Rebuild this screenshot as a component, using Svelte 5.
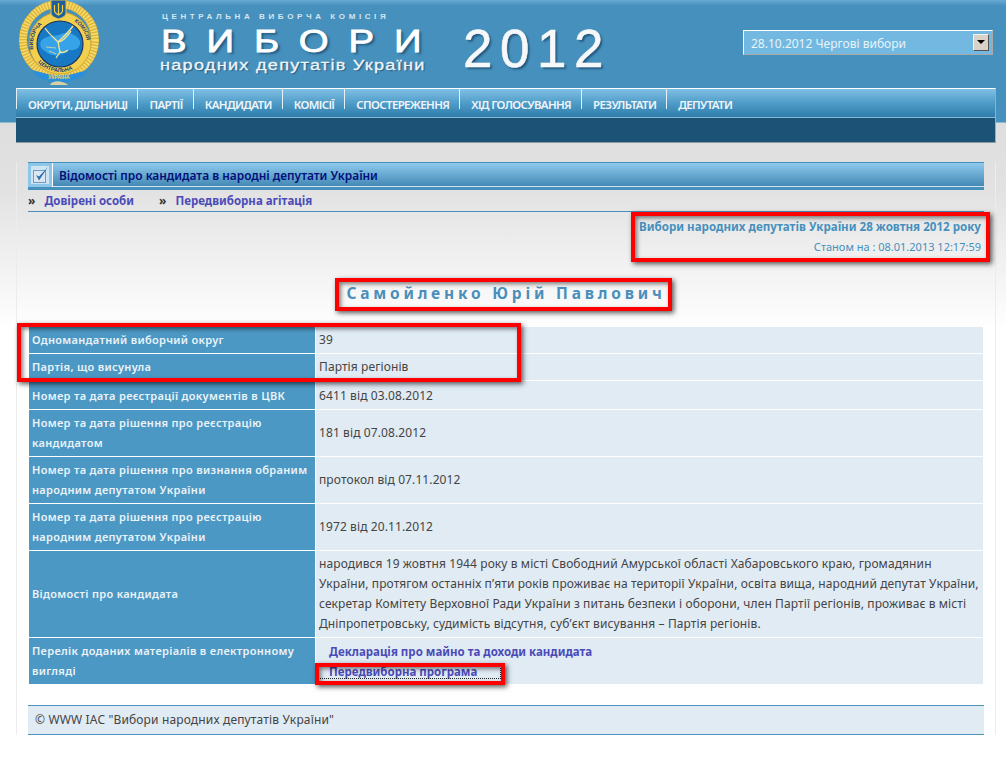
<script>
	const menu = ["ОКРУГИ, ДІЛЬНИЦІ", "ПАРТІЇ", "КАНДИДАТИ", "КОМІСІЇ", "СПОСТЕРЕЖЕННЯ", "ХІД ГОЛОСУВАННЯ", "РЕЗУЛЬТАТИ", "ДЕПУТАТИ"];

	const rows = [
		["Одномандатний виборчий округ", "39"],
		["Партія, що висунула", "Партія регіонів"],
		["Номер та дата реєстрації документів в ЦВК", "6411 від 03.08.2012"],
		["Номер та дата рішення про реєстрацію кандидатом", "181 від 07.08.2012"],
		["Номер та дата рішення про визнання обраним народним депутатом України", "протокол від 07.11.2012"],
		["Номер та дата рішення про реєстрацію народним депутатом України", "1972 від 20.11.2012"],
		["Відомості про кандидата", "народився 19 жовтня 1944 року в місті Свободний Амурської області Хабаровського краю, громадянин України, протягом останніх п’яти років проживає на території України, освіта вища, народний депутат України, секретар Комітету Верховної Ради України з питань безпеки і оборони, член Партії регіонів, проживає в місті Дніпропетровську, судимість відсутня, суб’єкт висування – Партія регіонів."],
	];

	// annotation boxes drawn over the page: x, y, w, h
	const marks = [
		[631, 212, 359, 50],
		[335, 278, 337, 33],
		[17, 323, 504, 59],
		[315, 663, 190, 22],
	];
</script>

<div class="page">
	<header>
		<svg class="logo" viewBox="18 0 82 85" width="82" height="85" aria-label="Герб">
			<defs>
				<path id="ring" d="M36 57 A27 27 0 1 1 84 57" />
				<path id="ringlow" d="M31 48 A29.500 29.500 0 0 0 89 48" />
			</defs>
			<circle cx="59" cy="40" r="36" fill="none" stroke="#e0b638" stroke-width="8" />
			<circle cx="59" cy="40" r="36" fill="none" stroke="#f6dc70" stroke-width="7" stroke-dasharray="1.500 1.500" />
			<circle cx="60" cy="43" r="31" fill="#f2d04e" stroke="#c29c2c" stroke-width="0.800" />
			<circle cx="60" cy="44" r="23" fill="#1778c4" stroke="#1d3560" stroke-width="1.200" />
			<path d="M41 41 C47 34 55 37 61 34 C69 31 77 35 80 41 C81 48 75 51 69 50 C61 57 51 57 45 51 C41 49 39 45 41 41Z" fill="#36a2e8" />
			<g fill="none" stroke="#f3e396" stroke-width="1.300">
				<path d="M45 28 C49 34 54 38 58 42 C62 38 68 33 73 26" />
				<path d="M58 42 C62 42 66 38 71 31" />
				<path d="M58 42 L60 52 L56 58" />
				<path d="M60 52 C64 53 66 52 68 50" />
				<path d="M46 47 L56 48 M49 51 L56 54" stroke-width="0.700" />
			</g>
			<g class="ringtext" fill="#1f3c6e">
				<text><textPath href="#ring" startOffset="8">ВИБОРЧА</textPath></text>
				<text><textPath href="#ring" startOffset="70">КОМІСІЯ</textPath></text>
				<text><textPath href="#ringlow" startOffset="16">ЦЕНТРАЛЬНА</textPath></text>
			</g>
			<path d="M51 0 H66 V14 C65 17 61 18 58.500 19 C56 18 52 17 51 14Z" fill="#1f5f9e" stroke="#e3c040" stroke-width="1" />
			<path d="M58.500 3 V15 M54.500 5 V11 C54.500 13 57 14 58.500 15 C60 14 62.500 13 62.500 11 V5" fill="none" stroke="#f2d040" stroke-width="1.200" />
			<path d="M32 70 L44 73 C52 76 68 76 76 73 L88 70 L83 76 L74 80 C64 83 54 83 44 80 L37 76Z" fill="#2a8fdc" />
			<text class="ribbon" x="59" y="78.500" text-anchor="middle" fill="#f2d75a">УКРАЇНА</text>
			<path d="M50 85 C52 80 62 80 68 85Z" fill="#d8d0a0" />
		</svg>

		<div class="brand">
			<div class="cvk">ЦЕНТРАЛЬНА ВИБОРЧА КОМІСІЯ</div>
			<div class="vybory">ВИБОРИ</div>
			<div class="deputies">народних депутатів України</div>
		</div>
		<div class="year">2012</div>

		<div class="select">
			<span>28.10.2012 Чергові вибори</span>
			<i class="arrow"></i>
		</div>
	</header>

	<nav>
		{#each menu as item}
			<a href="#top">{item}</a>
		{/each}
	</nav>
	<div class="darkbar"></div>

	<main>
		<div class="title">
			<span class="check">
				<svg viewBox="0 0 18 18" width="18" height="18">
					<rect x="2.500" y="4.500" width="12" height="12" fill="#dbe8f3" stroke="#6a9cc4" />
					<path d="M5 9 L8 14.500 L17 1 L8 10.500 Z" fill="#2f6ea8" />
				</svg>
			</span>
			<h1>Відомості про кандидата в народні депутати України</h1>
		</div>
		<div class="subnav">
			<span>»</span><a href="#top">Довірені особи</a>
			<span class="second">»</span><a href="#top">Передвиборна агітація</a>
		</div>

		<div class="meta">
			<b>Вибори народних депутатів України 28 жовтня 2012 року</b>
			<p>Станом на : 08.01.2013 12:17:59</p>
		</div>

		<h2>Самойленко Юрій Павлович</h2>

		<table>
			<tbody>
				{#each rows as [label, value]}
					<tr>
						<th>{label}</th>
						<td>{value}</td>
					</tr>
				{/each}
				<tr>
					<th>Перелік доданих матеріалів в електронному вигляді</th>
					<td class="files">
						<a href="#top">Декларація про майно та доходи кандидата</a>
						<a href="#top" class="focused">Передвиборна програма</a>
					</td>
				</tr>
			</tbody>
		</table>

		<footer>© WWW IAC "Вибори народних депутатів України"</footer>
	</main>

	{#each marks as [x, y, w, h]}
		<div class="mark" style="left:{x}px;top:{y}px;width:{w}px;height:{h}px"></div>
	{/each}
</div>

<style>
	:global(body) {
		margin: 0;
		background: #fff;
	}

	.page {
		position: relative;
		height: 757px;
		overflow: hidden;
		font-family: "Noto Sans", "DejaVu Sans", sans-serif;
		font-size: 12px;
		color: #444;
		background: linear-gradient(
			#68abd5 0,
			#4590bc 6px,
			#4590bc 122px,
			#dedede 123px,
			#e2e2e2 190px,
			#fff 330px
		);
	}

	header {
		display: flex;
		height: 88px;
		padding-left: 18px;
		box-sizing: border-box;
	}

	.logo {
		flex: none;
	}

	.brand {
		width: 303px;
		margin-left: 60px;
		padding-top: 12px;
		color: #fff;
		font-family: "Liberation Sans", sans-serif;
		white-space: nowrap;
	}

	.cvk {
		margin-left: 2px;
		font-size: 8px;
		line-height: 10px;
		letter-spacing: 3.600px;
		color: #d4e6f2;
		font-weight: 700;
	}

	.vybory {
		margin: 2px 0 0 1px;
		font-size: 32px;
		line-height: 34px;
		letter-spacing: 16.600px;
		transform: scaleX(1.2);
		transform-origin: left;
		-webkit-text-stroke: 0.800px #fff;
		text-shadow: 2px 2px 2px #25597f;
	}

	.deputies {
		font-size: 14px;
		line-height: 14px;
		letter-spacing: 1px;
		transform: scaleX(1.29);
		transform-origin: left;
		color: #eef4f8;
		-webkit-text-stroke: 0.300px #eef4f8;
		text-shadow: 1px 1px 1px #25597f;
	}

	.year {
		height: 60px;
		margin-top: 19px;
		font-family: "Liberation Sans", sans-serif;
		font-size: 53px;
		line-height: 60px;
		letter-spacing: 7.500px;
		color: #f6f8fa;
		-webkit-text-stroke: 0.600px #f6f8fa;
		text-shadow: 2px 2px 2px #25597f;
	}

	.select {
		display: flex;
		align-items: center;
		justify-content: space-between;
		box-sizing: border-box;
		width: 250px;
		height: 25px;
		margin: 30px 13px 0 auto;
		padding: 0 3px 0 7px;
		background: #72b8e0;
		border: 1px solid;
		border-color: #fff #a9a9a9 #a9a9a9 #fff;
		color: #e8f3fa;
		font-size: 12px;
	}

	.select span {
		padding-top: 1px;
	}

	.arrow {
		position: relative;
		display: block;
		box-sizing: border-box;
		width: 16px;
		height: 17px;
		background: #d8d2c8;
		border: 1px solid;
		border-color: #f4f2ee #555 #555 #f4f2ee;
	}

	.arrow::after {
		content: "";
		position: absolute;
		left: 3px;
		top: 5px;
		border: 4px solid transparent;
		border-top: 4px solid #000;
	}

	nav {
		display: flex;
		box-sizing: border-box;
		height: 30px;
		margin: 0 10px 0 16px;
		background: linear-gradient(#7fbfe5 0, #4f9cc8 14px, #2f7dab 28px);
		border-top: 1px solid #fff;
		border-bottom: 1px solid #82b9d8;
		border-right: 1px solid #a9a9a9;
	}

	nav a {
		box-sizing: border-box;
		height: 28px;
		padding: 8px 10px 0 11px;
		border-left: 1px solid #d3e6f2;
		border-image: linear-gradient(#e4f0f7 0 20px, transparent 20px) 1;
		color: #eef5fa;
		font-size: 11.500px;
		line-height: 16px;
		font-weight: 600;
		letter-spacing: -0.650px;
		text-decoration: none;
		white-space: nowrap;
	}

	.darkbar {
		box-sizing: border-box;
		height: 25px;
		margin: 0 10px 0 16px;
		background: #1c5275;
		border-right: 1px solid #a9a9a9;
		border-bottom: 1px solid #8b9aa6;
	}

	main {
		box-sizing: border-box;
		height: 573px;
		margin: 19px 10px 0 16px;
		padding: 0 11px;
		border-left: 1px solid #ececec;
		border-right: 1px solid #ececec;
	}

	.title {
		display: flex;
		height: 28px;
		border-top: 1px solid #4590bc;
		border-bottom: 3px solid #4590bc;
		box-sizing: border-box;
	}

	.check {
		display: flex;
		align-items: center;
		justify-content: center;
		width: 25px;
		background: #8cc6e8;
		border-right: 1px solid #fff;
		box-sizing: border-box;
	}

	.check svg {
		background: #cfe4f3;
	}

	h1 {
		flex: 1;
		margin: 0;
		padding-left: 6px;
		background: linear-gradient(#8fcaec, #4489b6);
		border-bottom: 1px solid #cfe2ee;
		color: #00107a;
		font-size: 11.900px;
		font-weight: 600;
		line-height: 24px;
	}

	.subnav {
		display: flex;
		align-items: center;
		height: 22px;
		border-bottom: 1px solid #4590bc;
		box-sizing: border-box;
		color: #333;
		font-weight: 700;
	}

	.subnav a {
		margin-left: 9px;
		color: #4b4bb8;
		font-size: 11.500px;
		font-weight: 700;
		text-decoration: none;
	}

	.subnav .second {
		margin-left: 25px;
	}

	.meta {
		margin-right: 3px;
		padding-top: 5px;
		text-align: right;
		color: #4590bc;
		line-height: 20px;
	}

	.meta b {
		font-size: 11.600px;
		font-weight: 700;
	}

	.meta p {
		margin: 0;
		font-size: 11px;
	}

	h2 {
		margin: 26px 0 0;
		text-align: center;
		color: #4a8fbb;
		font-size: 15.500px;
		line-height: 20px;
		letter-spacing: 3.800px;
		font-weight: 700;
	}

	table {
		width: 956px;
		margin: 23px 0 0;
		border-collapse: collapse;
		background: #fff;
	}

	th,
	td {
		padding: 3px 2px 3px 3px;
		line-height: 20px;
		border: 1px solid #fff;
		box-sizing: border-box;
	}

	tr:nth-child(3) th,
	tr:nth-child(3) td {
		padding-top: 5px;
	}

	th {
		width: 287px;
		background: #4c98c4;
		color: #eaf3f9;
		font-size: 11px;
		font-weight: 600;
		text-align: left;
		letter-spacing: 0.320px;
	}

	td {
		background: #e1ebf4;
		color: #444;
		letter-spacing: 0.100px;
	}

	.files a {
		display: block;
		padding-left: 10px;
		color: #4b4bb8;
		font-size: 11.500px;
		font-weight: 700;
		letter-spacing: 0;
		text-decoration: none;
	}

	.files .focused {
		width: 181px;
		box-sizing: border-box;
		margin: 4px 0 3px;
		line-height: 12px;
		outline: 1px dotted #222;
	}

	footer {
		box-sizing: border-box;
		height: 30px;
		margin: 20px 0 0 0;
		padding-left: 7px;
		background: #e1ebf4;
		border-top: 1px solid #4f93bf;
		border-bottom: 1px solid #4f93bf;
		line-height: 28px;
		letter-spacing: 0.150px;
	}

	.mark {
		position: absolute;
		box-sizing: border-box;
		border: 4px solid #f00;
		box-shadow:
			2px 2px 5px rgba(0, 0, 0, 0.65),
			inset 2px 2px 4px rgba(0, 0, 0, 0.5);
	}

	.ringtext {
		font-family: "Liberation Sans", sans-serif;
		font-size: 5.500px;
		font-weight: 700;
	}

	.ribbon {
		font-family: "Liberation Sans", sans-serif;
		font-size: 5px;
		font-weight: 700;
	}
</style>
